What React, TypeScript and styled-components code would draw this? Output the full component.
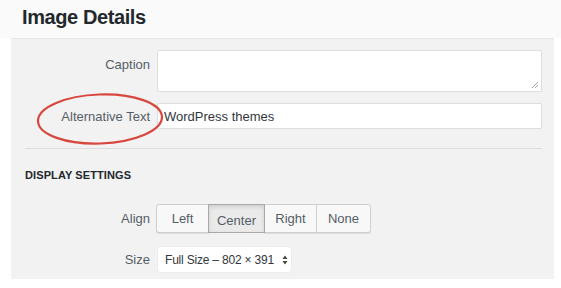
import React from "react";
import styled, { createGlobalStyle } from "styled-components";

const Global = createGlobalStyle`
  html, body { margin: 0; padding: 0; background: #ffffff; }
  body { font-family: "Liberation Sans", Arial, sans-serif; width: 561px; height: 288px; overflow: hidden; }
`;

const Page = styled.div`
  position: relative;
  width: 561px;
  height: 288px;
  background: #ffffff;
`;

const Header = styled.div`
  height: 38px;
  background: #fafafa;
  display: flex;
  align-items: center;
  padding-left: 22px;
  box-sizing: border-box;
`;

const Title = styled.h1`
  margin: 0;
  font-size: 20px;
  font-weight: 700;
  color: #23282d;
  letter-spacing: -0.4px;
  padding-bottom: 4px;
`;

const Panel = styled.div`
  margin: 0 7px 0 11px;
  height: 241px;
  background: #f2f2f3;
  border-top: 1px solid #e6e6e8;
  box-sizing: border-box;
  padding: 11px 12px 0 0;
  display: flex;
  flex-direction: column;
`;

const Row = styled.div<{ $mt?: number; $top?: boolean }>`
  display: grid;
  grid-template-columns: 139px 1fr;
  column-gap: 6px;
  align-items: ${(p) => (p.$top ? "start" : "center")};
  margin-top: ${(p) => p.$mt ?? 0}px;
`;

const Label = styled.label<{ $pt?: number }>`
  text-align: right;
  font-size: 13px;
  color: #555d66;
  padding-top: ${(p) => p.$pt ?? 0}px;
`;

const TextArea = styled.div`
  height: 42px;
  background: #fff;
  border: 1px solid #dedee0;
  border-radius: 2px;
  position: relative;
  box-sizing: border-box;
  margin-left: 1px;
`;

const Grip = styled.svg`
  position: absolute;
  right: 2px;
  bottom: 2px;
`;

const Input = styled.div`
  height: 26px;
  background: #fff;
  border: 1px solid #dedee0;
  border-radius: 2px;
  box-sizing: border-box;
  margin-left: 1px;
  display: flex;
  align-items: center;
  padding-left: 6px;
  font-size: 13px;
  color: #32373c;
`;

const Divider = styled.hr`
  margin: 19px 0 0 14px;
  border: 0;
  border-top: 1px solid #dcdcde;
`;

const SectionTitle = styled.h2`
  margin: 20px 0 0 14px;
  font-size: 11px;
  font-weight: 700;
  color: #23282d;
  letter-spacing: 0.1px;
  text-transform: uppercase;
`;

const ButtonGroup = styled.div`
  display: flex;
`;

const SegButton = styled.button<{ $active?: boolean; $w: number }>`
  width: ${(p) => p.$w}px;
  height: 29px;
  font-family: inherit;
  font-size: 13px;
  color: #555d66;
  background: ${(p) => (p.$active ? "#eaeaeb" : "#f8f8f8")};
  border: 1px solid ${(p) => (p.$active ? "#a8a8ab" : "#cfcfd1")};
  margin-left: -1px;
  padding: 0;
  box-shadow: ${(p) => (p.$active ? "inset 0 2px 4px rgba(0,0,0,0.12)" : "0 1px 0 #dcdcde")};
  position: relative;
  z-index: ${(p) => (p.$active ? 1 : 0)};
  &:first-child { border-radius: 3px 0 0 3px; margin-left: 0; }
  &:last-child { border-radius: 0 3px 3px 0; }
  padding-top: ${(p) => (p.$active ? 3 : 0)}px;
`;

const Select = styled.div`
  width: 133px;
  height: 25px;
  background: #fff;
  border-radius: 3px;
  box-sizing: border-box;
  margin-left: 2px;
  display: flex;
  align-items: center;
  justify-content: space-between;
  padding: 0 3px 0 7px;
  font-size: 12px;
  letter-spacing: -0.2px;
  white-space: nowrap;
  color: #32373c;
  box-shadow: 0 0 0 1px #ececee;
`;

const Ellipse = styled.svg`
  position: absolute;
  left: 34px;
  top: 91px;
  pointer-events: none;
`;

export default function App() {
  return (
    <Page>
      <Global />
      <Header>
        <Title>Image Details</Title>
      </Header>
      <Panel>
        <Row $top>
          <Label $pt={7}>Caption</Label>
          <TextArea>
            <Grip width="8" height="8" viewBox="0 0 8 8">
              <path d="M7 1 L1 7 M7 4 L4 7" stroke="#9a9a9a" strokeWidth="0.9" fill="none" />
            </Grip>
          </TextArea>
        </Row>
        <Row $mt={11}>
          <Label>Alternative Text</Label>
          <Input>WordPress themes</Input>
        </Row>
        <Divider />
        <SectionTitle>Display Settings</SectionTitle>
        <Row $mt={23}>
          <Label>Align</Label>
          <ButtonGroup>
            <SegButton $w={53}>Left</SegButton>
            <SegButton $w={57} $active>Center</SegButton>
            <SegButton $w={53}>Right</SegButton>
            <SegButton $w={55}>None</SegButton>
          </ButtonGroup>
        </Row>
        <Row $mt={14}>
          <Label>Size</Label>
          <Select>
            <span>Full Size – 802 × 391</span>
            <svg width="6" height="10" viewBox="0 0 6 10">
              <path d="M0.5 4 L3 0.5 L5.5 4 Z M0.5 6 L3 9.5 L5.5 6 Z" fill="#444" />
            </svg>
          </Select>
        </Row>
      </Panel>
      <Ellipse width="134" height="58" viewBox="0 0 134 58">
        <ellipse cx="66" cy="28" rx="62" ry="24.5" fill="none" stroke="#d8473d" strokeWidth="2.2" transform="rotate(-2 66 28)" />
      </Ellipse>
    </Page>
  );
}
